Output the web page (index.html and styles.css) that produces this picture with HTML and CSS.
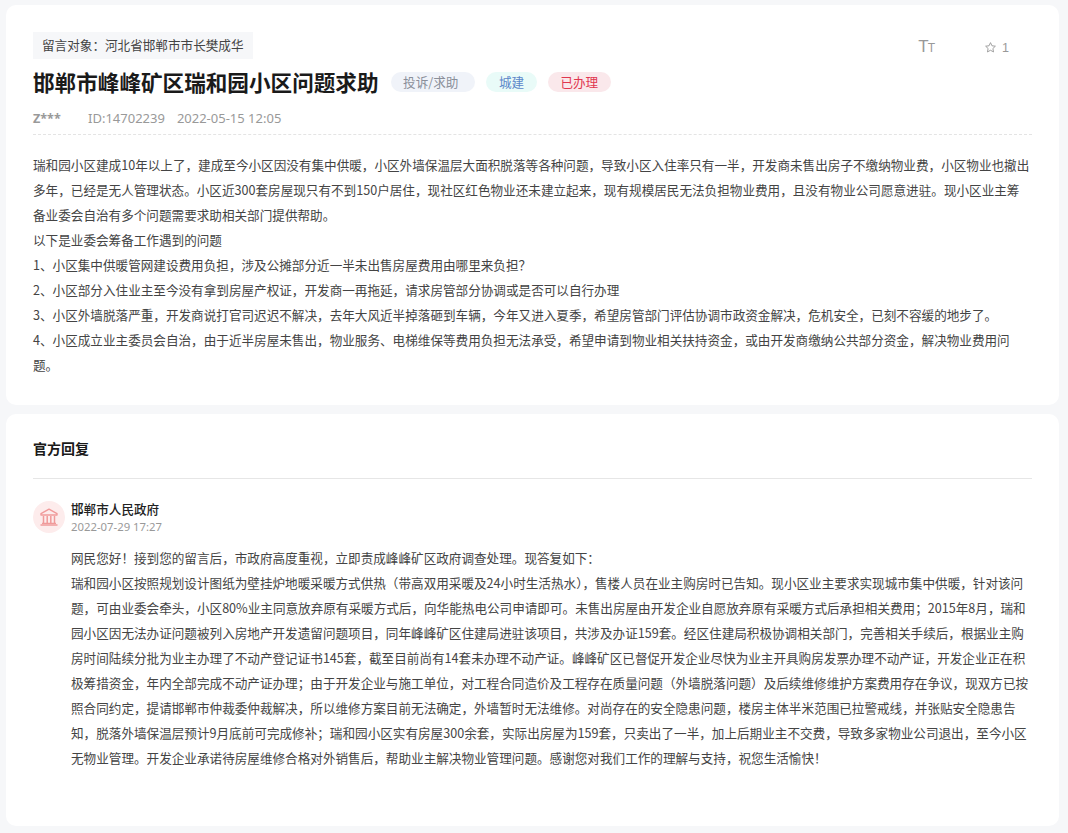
FILE: index.html
```html
<!DOCTYPE html>
<html lang="zh-CN">
<head>
<meta charset="utf-8">
<title>邯郸市峰峰矿区瑞和园小区问题求助</title>
<link rel="stylesheet" href="styles.css">
</head>
<body>
<main class="page">
  <section class="card question">
    <div class="top">
      <div class="target">留言对象：河北省邯郸市市长樊成华</div>
      <div class="tools">
        <span class="font-tool">T<small>T</small></span>
        <span class="fav">
          <svg viewBox="0 0 24 24" width="13" height="13"><path d="M12 3l2.7 5.8 6.3.8-4.6 4.3 1.2 6.3L12 17.1 6.4 20.2l1.2-6.3L3 9.6l6.3-.8z" fill="none" stroke="currentColor" stroke-width="1.7" stroke-linejoin="round"/></svg>
          1
        </span>
      </div>
    </div>
    <div class="title-row">
      <h1>邯郸市峰峰矿区瑞和园小区问题求助</h1>
      <span class="tag tag-type">投诉/求助</span>
      <span class="tag tag-field">城建</span>
      <span class="tag tag-state">已办理</span>
    </div>
    <div class="meta">
      <b>Z***</b>
      <span>ID:14702239</span>
      <span>2022-05-15 12:05</span>
    </div>
    <div class="body">
      <p>瑞和园小区建成10年以上了，建成至今小区因没有集中供暖，小区外墙保温层大面积脱落等各种问题，导致小区入住率只有一半，开发商未售出房子不缴纳物业费，小区物业也撤出多年，已经是无人管理状态。小区近300套房屋现只有不到150户居住，现社区红色物业还未建立起来，现有规模居民无法负担物业费用，且没有物业公司愿意进驻。现小区业主筹备业委会自治有多个问题需要求助相关部门提供帮助。</p>
      <p>以下是业委会筹备工作遇到的问题</p>
      <p>1、小区集中供暖管网建设费用负担，涉及公摊部分近一半未出售房屋费用由哪里来负担？</p>
      <p>2、小区部分入住业主至今没有拿到房屋产权证，开发商一再拖延，请求房管部分协调或是否可以自行办理</p>
      <p>3、小区外墙脱落严重，开发商说打官司迟迟不解决，去年大风近半掉落砸到车辆，今年又进入夏季，希望房管部门评估协调市政资金解决，危机安全，已刻不容缓的地步了。</p>
      <p>4、小区成立业主委员会自治，由于近半房屋未售出，物业服务、电梯维保等费用负担无法承受，希望申请到物业相关扶持资金，或由开发商缴纳公共部分资金，解决物业费用问题。</p>
    </div>
  </section>
  <section class="card reply">
    <h2>官方回复</h2>
    <div class="org">
      <div class="avatar">
        <svg viewBox="0 0 20 18" width="20" height="18" fill="none" stroke="#f09a9a"><path d="M10 1.2L2 5.6V7h16V5.6z" stroke-width="1.4" stroke-linejoin="round"/><path d="M4.5 8v7M8.2 8v7M11.8 8v7M15.5 8v7" stroke-width="1.5"/><path d="M3 15.4h14M1.5 17h17" stroke-width="1.3"/></svg>
      </div>
      <div class="org-info">
        <div class="org-name">邯郸市人民政府</div>
        <div class="org-time">2022-07-29 17:27</div>
      </div>
    </div>
    <div class="reply-body">
      <p>网民您好！接到您的留言后，市政府高度重视，立即责成峰峰矿区政府调查处理。现答复如下：</p>
      <p>瑞和园小区按照规划设计图纸为壁挂炉地暖采暖方式供热（带高双用采暖及24小时生活热水），售楼人员在业主购房时已告知。现小区业主要求实现城市集中供暖，针对该问题，可由业委会牵头，小区80%业主同意放弃原有采暖方式后，向华能热电公司申请即可。未售出房屋由开发企业自愿放弃原有采暖方式后承担相关费用；2015年8月，瑞和园小区因无法办证问题被列入房地产开发遗留问题项目，同年峰峰矿区住建局进驻该项目，共涉及办证159套。经区住建局积极协调相关部门，完善相关手续后，根据业主购房时间陆续分批为业主办理了不动产登记证书145套，截至目前尚有14套未办理不动产证。峰峰矿区已督促开发企业尽快为业主开具购房发票办理不动产证，开发企业正在积极筹措资金，年内全部完成不动产证办理；由于开发企业与施工单位，对工程合同造价及工程存在质量问题（外墙脱落问题）及后续维修维护方案费用存在争议，现双方已按照合同约定，提请邯郸市仲裁委仲裁解决，所以维修方案目前无法确定，外墙暂时无法维修。对尚存在的安全隐患问题，楼房主体半米范围已拉警戒线，并张贴安全隐患告知，脱落外墙保温层预计9月底前可完成修补；瑞和园小区实有房屋300余套，实际出房屋为159套，只卖出了一半，加上后期业主不交费，导致多家物业公司退出，至今小区无物业管理。开发企业承诺待房屋维修合格对外销售后，帮助业主解决物业管理问题。感谢您对我们工作的理解与支持，祝您生活愉快！</p>
    </div>
  </section>
</main>
</body>
</html>
```

FILE: styles.css
```css
* { box-sizing: border-box; }
html, body { margin: 0; padding: 0; }
body {
  width: 1068px;
  height: 833px;
  overflow: hidden;
  background: #f6f7f9;
  font-family: "Noto Sans CJK SC", "Noto Sans", sans-serif;
  color: #333;
}
.page {
  padding: 5px 9px 0 6px;
  display: flex;
  flex-direction: column;
  gap: 9px;
}
.card {
  background: #fff;
  border-radius: 10px;
}
.question {
  height: 400px;
  padding: 27px 27px 0;
}
.top {
  display: flex;
  justify-content: space-between;
  align-items: flex-start;
}
.target {
  background: #f6f7f9;
  height: 27px;
  line-height: 26px;
  padding: 0 9px;
  font-size: 12.6px;
  color: #444;
}
.tools {
  display: flex;
  align-items: center;
  color: #999;
  padding: 6px 23px 0 0;
  font-size: 12.6px;
  gap: 50px;
}
.font-tool {
  font-family: "Liberation Sans", sans-serif;
  font-size: 17px;
  line-height: 17px;
  color: #999;
  letter-spacing: -1px;
}
.font-tool small { font-size: 12px; }
.fav {
  display: flex;
  align-items: center;
  gap: 5px;
  font-family: "Liberation Sans", sans-serif;
}
.title-row {
  display: flex;
  align-items: center;
  margin-top: 8px;
  height: 30px;
}
h1 {
  margin: 0 12px 0 0;
  font-size: 21.6px;
  font-weight: 700;
  color: #1a1a1a;
  line-height: 30px;
}
.tag {
  height: 20px;
  line-height: 20px;
  border-radius: 10px;
  font-size: 12.6px;
  padding: 0 12.6px;
  margin-right: 11px;
}
.tag-type { background: #f0f3f9; color: #8a8f99; padding-right: 17px; }
.tag-field { background: #e9fbf8; color: #5b86c9; }
.tag-state { background: #fae8eb; color: #e0364f; }
.meta {
  display: flex;
  align-items: center;
  gap: 12px;
  margin-top: 9px;
  height: 24px;
  font-family: "Noto Sans", "Noto Sans CJK SC", sans-serif;
  font-size: 13px;
  color: #999;
}
.meta b { width: 43px; font-size: 12.6px; }
.body {
  margin-top: 4px;
  border-top: 1px dashed #e4e4e4;
  padding-top: 17px;
  font-size: 12.6px;
  line-height: 25px;
  color: #444;
}
.body p, .reply-body p { margin: 0; }
.reply {
  height: 412px;
  padding: 23px 27px 0 27px;
}
h2 {
  margin: 0;
  font-size: 14px;
  font-weight: 700;
  line-height: 22px;
  color: #1a1a1a;
  padding-bottom: 19px;
  border-bottom: 1px solid #e6e6e6;
}
.org {
  display: flex;
  gap: 6px;
  margin-top: 22px;
}
.avatar {
  width: 32px;
  height: 32px;
  border-radius: 50%;
  background: #fdecec;
  display: flex;
  align-items: center;
  justify-content: center;
}
.org-name {
  font-size: 12.6px;
  font-weight: 500;
  line-height: 16px;
  color: #222;
}
.org-time {
  font-family: "Noto Sans", sans-serif;
  font-size: 11.34px;
  line-height: 16px;
  color: #999;
  margin-top: 2px;
}
.reply-body {
  margin-top: 10px;
  padding-left: 38px;
  font-size: 12.6px;
  line-height: 25px;
  color: #444;
}
```
